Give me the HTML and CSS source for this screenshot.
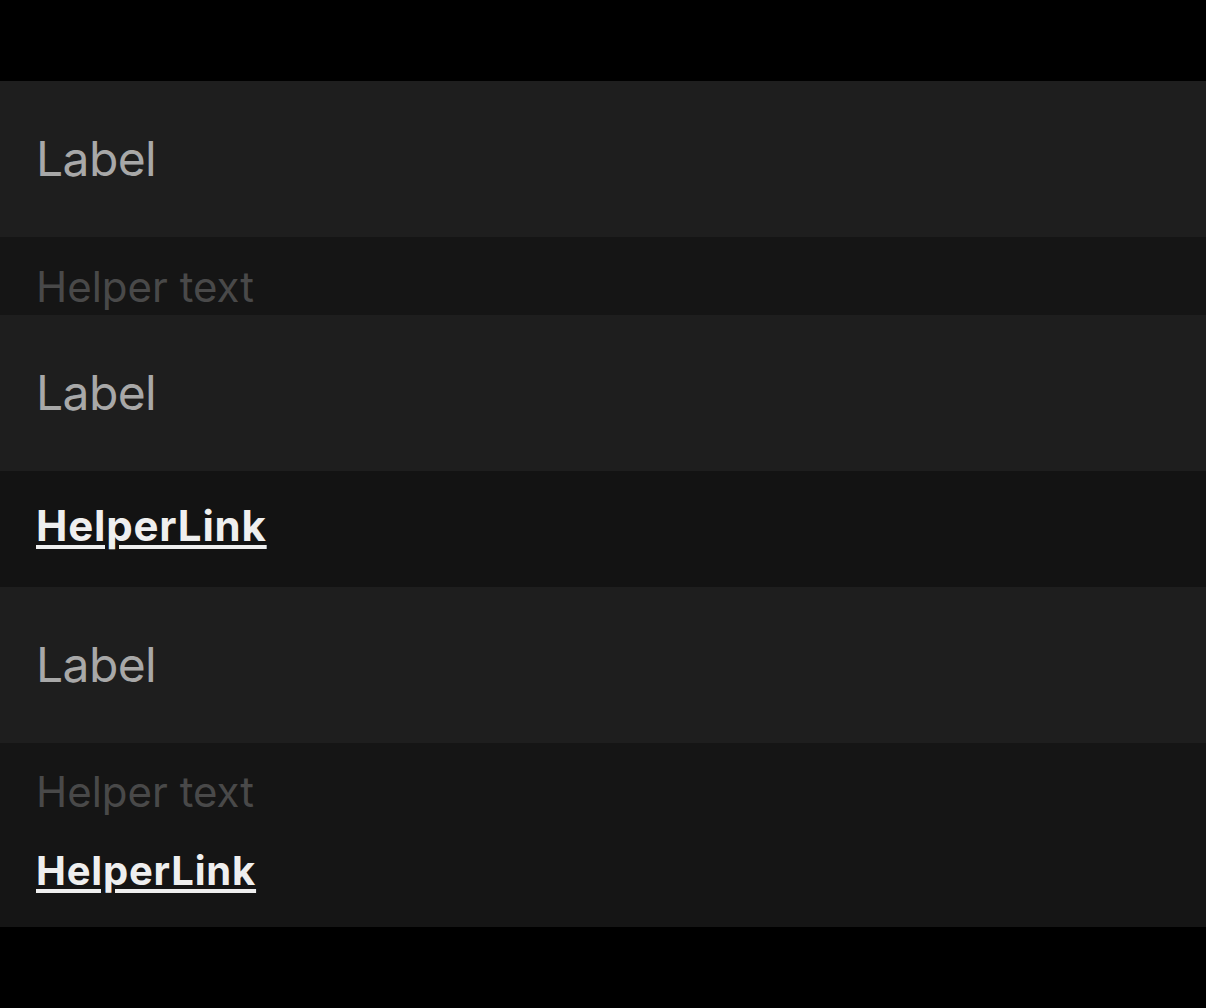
FILE: index.html
```html
<!DOCTYPE html>
<html>
<head>
<meta charset="utf-8">
<link rel="stylesheet" href="styles.css">
</head>
<body>
<main class="page">
  <section class="field">
    <div class="label-row"><span class="label">Label</span></div>
    <div class="helper helper-text-only"><span class="helper-text">Helper text</span></div>
  </section>
  <section class="field">
    <div class="label-row"><span class="label">Label</span></div>
    <div class="helper helper-link-only"><a class="helper-link" href="#">HelperLink</a></div>
  </section>
  <section class="field">
    <div class="label-row"><span class="label">Label</span></div>
    <div class="helper helper-both">
      <span class="helper-text">Helper text</span>
      <a class="helper-link small" href="#">HelperLink</a>
    </div>
  </section>
</main>
</body>
</html>
```

FILE: styles.css
```css
html, body {
  margin: 0;
  padding: 0;
  background: #000;
  height: 100%;
}
body {
  font-family: Inter, "Noto Sans", sans-serif;
}
.page {
  padding-top: 81px;
  display: flex;
  flex-direction: column;
}
.field {
  display: flex;
  flex-direction: column;
}
.label-row {
  height: 156px;
  background: #1e1e1e;
  display: flex;
  align-items: center;
  padding-left: 36px;
}
.label {
  font-size: 48px;
  line-height: 58px;
  letter-spacing: -0.6px;
  color: #a8a8a8;
}
.helper {
  background: #151515;
  padding-left: 36px;
  display: flex;
  flex-direction: column;
  align-items: flex-start;
}
.helper-text-only {
  height: 78px;
  box-sizing: border-box;
  padding-top: 20px;
  overflow: hidden;
}
.helper-link-only {
  background: #131313;
  height: 116px;
  box-sizing: border-box;
  padding-top: 25px;
}
.helper-both {
  height: 184px;
  box-sizing: border-box;
  padding-top: 19px;
  gap: 19px;
}
.helper-text {
  font-size: 42px;
  line-height: 60px;
  color: #494949;
}
.helper-link {
  font-size: 42px;
  line-height: 60px;
  font-weight: 700;
  letter-spacing: 0.8px;
  color: #efefef;
  text-decoration: underline;
  text-decoration-thickness: 4px;
  text-underline-offset: 4px;
}
.helper-link.small {
  font-size: 40px;
}
```
